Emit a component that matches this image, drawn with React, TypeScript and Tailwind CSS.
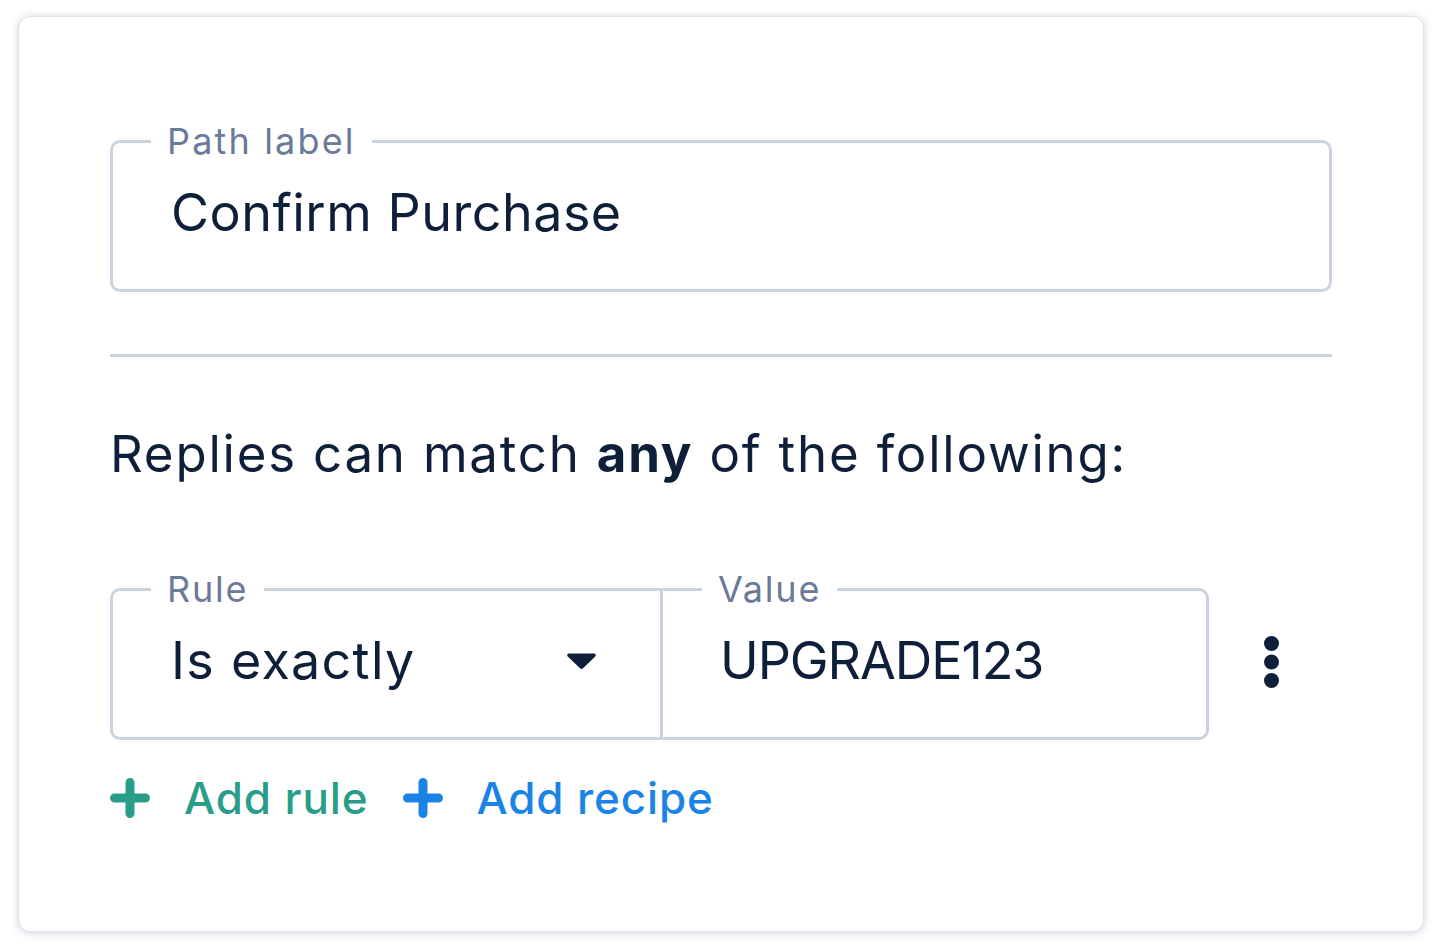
import React from 'react'

const border = 'border-[#cbd3e0]'

const Kebab = () => (
  <svg width="15" height="52" viewBox="0 0 15 52" className="mt-[65px] ml-[55px] shrink-0">
    <circle cx="7.5" cy="7.5" r="7.5" fill="#0e1f3a" />
    <circle cx="7.5" cy="26" r="7.5" fill="#0e1f3a" />
    <circle cx="7.5" cy="44.5" r="7.5" fill="#0e1f3a" />
  </svg>
)

const Plus = ({ color }: { color: string }) => (
  <svg width="40" height="40" viewBox="0 0 40 40" className="shrink-0">
    <path d="M20 4.5v31M4.5 20h31" stroke={color} strokeWidth="9" strokeLinecap="round" fill="none" />
  </svg>
)

const App = () => {
  return (
    <div className="min-h-screen bg-white pt-[16px] pl-[18px] font-['Inter','Noto_Sans',sans-serif]">
      <div className="w-[1406px] h-[916px] rounded-[12px] border border-[#dde2ec] bg-white px-[91px] pt-[106px] shadow-[0_1px_9px_rgba(40,60,110,0.22)] text-[#0e1f3a]">
        {/* path label */}
        <fieldset className={`border-[3px] ${border} rounded-[10px] pl-[54px]`}>
          <legend className="ml-[-16px] px-[16px] text-[36px] leading-[36px] tracking-[0.06em] text-[#6b7a99]">Path label</legend>
          <div className="pt-[28px] pb-[50px] pl-[4px] text-[52px] leading-[52px] tracking-[0.01em]">Confirm Purchase</div>
        </fieldset>

        <div className="mt-[62px] h-[3px] bg-[#cbd3e0]" />

        <p className="mt-[71px] text-[51px] leading-[51px] tracking-[0.035em]">
          Replies can match <span className="font-bold">any</span> of the following:
        </p>

        {/* rule row */}
        <div className="mt-[92px] flex items-start">
          <fieldset className={`w-[553px] border-[3px] ${border} rounded-l-[10px] pl-[54px] pr-[63px]`}>
            <legend className="ml-[-16px] px-[16px] text-[36px] leading-[36px] tracking-[0.05em] text-[#6b7a99]">Rule</legend>
            <div className="pt-[28px] pb-[50px] pl-[4px] flex items-center justify-between">
              <span className="text-[52px] leading-[52px] tracking-[0.025em]">Is exactly</span>
              <svg width="31" height="18" viewBox="0 0 31 18">
                <path d="M3 1.5h25c1.6 0 2.4 1.9 1.3 3L17 16.3c-.8.8-2.2.8-3 0L1.7 4.5C.6 3.4 1.4 1.5 3 1.5z" fill="#0e1f3a" />
              </svg>
            </div>
          </fieldset>
          <fieldset className={`w-[546px] border-[3px] border-l-0 ${border} rounded-r-[10px] pl-[55px]`}>
            <legend className="ml-[-16px] px-[16px] text-[36px] leading-[36px] tracking-[0.05em] text-[#6b7a99]">Value</legend>
            <div className="pt-[28px] pb-[50px] pl-[2px] text-[52px] leading-[52px] tracking-[-0.02em]">UPGRADE123</div>
          </fieldset>
          <Kebab />
        </div>

        {/* actions */}
        <div className="mt-[36px] flex items-center text-[44px] leading-[44px] font-medium tracking-[0.02em]">
          <button className="flex items-center text-[#2a9d8a]">
            <Plus color="#2a9d8a" />
            <span className="ml-[34px]">Add rule</span>
          </button>
          <button className="ml-[35px] flex items-center text-[#1a84e6]">
            <Plus color="#1a84e6" />
            <span className="ml-[33px]">Add recipe</span>
          </button>
        </div>
      </div>
    </div>
  )
}

export default App
